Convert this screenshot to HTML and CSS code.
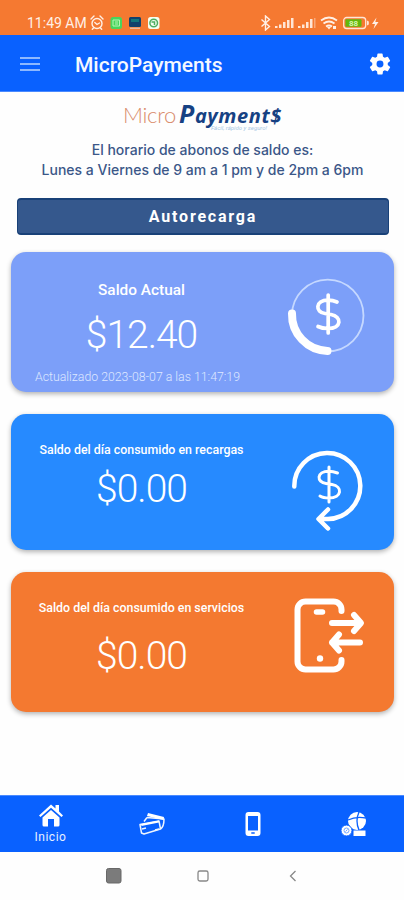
FILE: index.html
```
<!DOCTYPE html>
<html lang="es">
<head>
  <meta charset="UTF-8">
  <meta name="viewport" content="width=device-width, initial-scale=1.0">
  <title>MicroPayments</title>
  <link rel="stylesheet" href="styles.css">
</head>
<body>
  <div class="status">
    <div class="status-left">
      <span class="hora">11:49 AM</span>
      <svg width="70" height="16" viewBox="0 0 70 16">
        <g fill="none" stroke="#fff0e6" stroke-width="1.4" stroke-linecap="round">
          <circle cx="7" cy="8.500" r="5"/>
          <path d="M1 4l3-3M13 4l-3-3M4.800 7.500l2.200 2 2.500-1.500M3.500 13l-1.200 1.300M10.500 13l1.200 1.300"/>
        </g>
        <rect x="20.500" y="2" width="11.500" height="12" rx="2.500" fill="#48d45c"/>
        <path d="M23 5h6.500v6H23zM25 7h3M25 9h3" fill="none" stroke="#b6f5b5"/>
        <rect x="39" y="2" width="12" height="10" rx="1.500" fill="#12406b"/>
        <path d="M41 4h8v3h-8z" fill="#12757c"/>
        <path d="M40 13.300h10" stroke="#e8b9a0" stroke-width="1.500"/>
        <rect x="58" y="2" width="11.500" height="12" rx="2.500" fill="#f4fff2"/>
        <circle cx="63.700" cy="8" r="3.800" fill="none" stroke="#4cae62" stroke-width="1.500"/>
        <path d="M61.500 7h3v3" fill="none" stroke="#4cae62" stroke-width="1.500"/>
      </svg>
    </div>
    <svg width="120" height="16" viewBox="0 0 120 16">
      <path d="M1.500 4.500l8 7-4 3.500V1l4 3.500-8 7" fill="none" stroke="#fff0e6" stroke-width="1.400"/>
      <path d="M15 13h2.500v-2H15zm4 0h2.500V9.500H19zm4 0h2.500v-6H23zm4 0h2.500V5H27zm4 0h2.500V3H31z" fill="#ffe6d6"/>
      <path d="M38 13h2.500v-2H38zm4 0h2.500V9.500H42zm4 0h2.500v-6H46zm4 0h2.500V4H50z" fill="#ffe6d6"/>
      <path d="M54 13h1.500V3H54z" fill="#f9a878"/>
      <g fill="none" stroke="#fff0e6" stroke-width="1.800">
        <path d="M61 5.500q8-6 16 0M63.500 8.500q5.500-4 11 0M66 11.500q3-2 6 0"/>
      </g>
      <path d="M67 12h4l-2 2.500zM73 11h3v3h-3z" fill="#fff0e6"/>
      <rect x="83.700" y="2.500" width="22" height="11" rx="3" fill="none" stroke="#ffe6d6" stroke-width="1.300"/>
      <rect x="85.500" y="4.300" width="16" height="7.500" rx="1" fill="#63b80c"/>
      <path d="M107 5.500l1.800 1v3l-1.800 1z" fill="#ffe6d6"/>
      <text class="bateria" x="93.500" y="10.800" text-anchor="middle">88</text>
      <path d="M116.500 2.500L112 9h3l-1.500 5 5-7h-3.200z" fill="#fff0e6"/>
    </svg>
  </div>

  <header class="header">
    <svg width="20" height="14" viewBox="0 0 20 14">
      <path d="M0 1h20M0 7h20M0 13h20" stroke="#b9d5ff" stroke-width="1.600"/>
    </svg>
    <h1>MicroPayments</h1>
    <svg width="26" height="26" viewBox="0 0 24 24">
      <path fill="#fff" d="M19.140 12.940c.040-.300.060-.610.060-.940s-.020-.640-.070-.940l2.030-1.580a.490.490 0 0 0 .120-.610l-1.920-3.320a.490.490 0 0 0-.590-.220l-2.390.960a7 7 0 0 0-1.620-.940l-.360-2.540a.480.480 0 0 0-.480-.410h-3.840a.480.480 0 0 0-.470.410l-.360 2.540a7.300 7.300 0 0 0-1.620.940l-2.390-.960a.480.480 0 0 0-.590.220L2.740 8.870a.480.480 0 0 0 .120.610l2.030 1.580a6 6 0 0 0 0 1.880l-2.030 1.580a.490.490 0 0 0-.120.610l1.920 3.320c.120.220.370.290.590.220l2.390-.960c.500.380 1.030.700 1.620.940l.360 2.540c.050.240.240.410.480.410h3.840c.240 0 .440-.170.470-.410l.360-2.540a7 7 0 0 0 1.620-.940l2.390.960c.220.080.470 0 .590-.220l1.920-3.320a.480.480 0 0 0-.120-.610zM12 15.200a3.200 3.200 0 1 1 0-6.400 3.200 3.200 0 0 1 0 6.400z"/>
    </svg>
  </header>

  <main class="contenido">
    <div class="logo">
      <span class="logo-micro">Micro</span>
      <span class="logo-pay"><span class="logo-p">P</span>ayment$</span>
      <span class="lema">Fácil, rápido y seguro!</span>
    </div>
    <div class="horario">
      <p class="linea1">El horario de abonos de saldo es:</p>
      <p class="linea2">Lunes a Viernes de 9 am a 1 pm y de 2pm a 6pm</p>
    </div>
    <button class="autorecarga">Autorecarga</button>

    <section class="card card-actual">
      <div class="datos">
        <h2>Saldo Actual</h2>
        <p class="monto">$12.40</p>
        <p class="fecha">Actualizado 2023-08-07 a las 11:47:19</p>
      </div>
      <svg class="icono" width="90" height="90" viewBox="0 0 90 90" fill="none" stroke="#fff" stroke-linecap="round">
        <circle cx="44.700" cy="45.500" r="35.800" stroke="#c5d8ff" stroke-width="1.800"/>
        <path d="M9 43.500A36.500 36.500 0 0 0 44.500 81" stroke-width="8"/>
        <path d="M45.200 25v38M54 32Q50 30.200 45 30.200C32 30.200 32 42.500 42 43.500L48 44.500C59 46.500 59 58.500 45 58.500Q39 58.500 35 56.500" stroke-width="3.700"/>
      </svg>
    </section>

    <section class="card card-recargas">
      <div class="datos">
        <h2>Saldo del día consumido en recargas</h2>
        <p class="monto">$0.00</p>
      </div>
      <svg class="icono" width="90" height="92" viewBox="0 0 90 92" fill="none" stroke="#fff" stroke-linecap="round" stroke-linejoin="round">
        <path d="M11.300 46.500A33 33 0 1 1 45 79H36.500M45 69.500L35.500 79l9.500 9.500" stroke-width="4.500"/>
        <path d="M46 27v35M54.500 33Q50 31.300 46 31.300C33 31.300 33.500 42.500 43 43.500L49 44.500C60 46.500 59 58 46 58Q40 58 37 56" stroke-width="3"/>
      </svg>
    </section>

    <section class="card card-servicios">
      <div class="datos">
        <h2>Saldo del día consumido en servicios</h2>
        <p class="monto">$0.00</p>
      </div>
      <svg class="icono" width="90" height="90" viewBox="0 0 90 90" fill="none" stroke="#fff" stroke-width="6" stroke-linecap="round" stroke-linejoin="round">
        <path d="M58.500 21v-1.500a8 8 0 0 0-8-8h-28a8 8 0 0 0-8 8v52a8 8 0 0 0 8 8h28a8 8 0 0 0 8-8V70"/>
        <path d="M33.500 22h6" stroke-width="5.500"/>
        <path d="M49 33h28M71 25l7 8-7 8M77 52.500H49M56 44.500l-7 8 7 8"/>
        <circle cx="37" cy="68.500" r="3.200" fill="#fff" stroke="none"/>
      </svg>
    </section>
  </main>

  <nav class="tabs">
    <a class="tab">
      <svg width="26" height="24" viewBox="0 0 26 24">
        <path d="M1 12.500L13 1.500l4.500 4V2H21v6.500l4 4-1.500 1.500L13 4.700 2.500 14z" fill="#fff"/>
        <path d="M13 7l8.500 7.500V22q0 1.500-1.500 1.500h-4V16h-6v7.500H6Q4.500 23.500 4.500 22v-7.500z" fill="#fff"/>
      </svg>
      <span>Inicio</span>
    </a>
    <a class="tab">
      <svg width="26" height="24" viewBox="0 0 26 24">
        <g fill="none" stroke="#eef5ff" stroke-width="1.500" stroke-linejoin="round">
          <path d="M1 12.500l19-3.500 1.500 8-16.500 5-2.500-1z"/>
          <path d="M8 5.500L25 7q0 8-3.500 10M8 5.500L5 9.500M3 17l4-1M16 18l4-1"/>
        </g>
        <path d="M9 1l16 4-.5 3L8 4z" fill="#fff"/>
        <path d="M2 12l18-3.500v2L2.500 14z" fill="#fff"/>
      </svg>
    </a>
    <a class="tab">
      <svg width="26" height="24" viewBox="0 0 26 24">
        <path fill="#fff" fill-rule="evenodd" d="M8.500 0h9a3 3 0 0 1 3 3v18a3 3 0 0 1-3 3h-9a3 3 0 0 1-3-3V3a3 3 0 0 1 3-3zM8 4v14.500h10V4zM11.300 20.200v1.600h3.400v-1.600z"/>
      </svg>
    </a>
    <a class="tab">
      <svg width="26" height="24" viewBox="0 0 26 24">
        <circle cx="16" cy="9" r="9" fill="#fff"/>
        <path d="M7 8q8-4 18-2M18 0q-4 9 0 18" fill="none" stroke="#0961ff" stroke-width="1.300"/>
        <path d="M12.500 18.500h12V24h-12z" fill="#fff"/>
        <circle cx="5.500" cy="18.500" r="5.500" fill="#fff" stroke="#0961ff"/>
        <circle cx="5.500" cy="18.500" r="2.500" fill="none" stroke="#78a8ff"/>
        <path d="M4.500 19.500l2-2" stroke="#78a8ff"/>
      </svg>
    </a>
  </nav>

  <footer class="sistema">
    <svg width="404" height="48" viewBox="0 0 404 48">
      <rect x="106.500" y="16.500" width="14.500" height="14.500" rx="2" fill="#7b7b7b" stroke="#686868"/>
      <rect x="198" y="19" width="10" height="10" rx="1.800" fill="none" stroke="#888" stroke-width="1.300"/>
      <path d="M295.500 19l-5 5 5 5" fill="none" stroke="#888" stroke-width="1.300"/>
    </svg>
  </footer>
</body>
</html>
```
FILE: styles.css
```
* {
  box-sizing: border-box;
}
body {
  margin: 0;
  width: 404px;
  height: 900px;
  display: flex;
  flex-direction: column;
  background: #fefefe;
  font-family: Roboto, sans-serif;
  overflow: hidden;
}
h1, h2, p {
  margin: 0;
}
svg {
  display: block;
  flex-shrink: 0;
}
.status {
  height: 35px;
  padding: 11px 24px 0 27px;
  display: flex;
  justify-content: space-between;
  align-items: center;
  background: #f57931;
}
.status-left {
  display: flex;
  align-items: center;
  gap: 3px;
}
.hora {
  color: #fff0e6;
  font-size: 14px;
  line-height: 16px;
}
.bateria {
  font-size: 8px;
  font-weight: bold;
  fill: #d8f5b0;
}
.header {
  height: 57px;
  padding: 1px 11px 0 20px;
  display: flex;
  align-items: center;
  background: #0961ff;
  border-bottom: 1px solid #4a8aff;
}
.header h1 {
  flex: 1;
  margin: 2px 0 0 35px;
  color: #f4f8ff;
  font-size: 21px;
  font-weight: 500;
}
.contenido {
  flex: 1;
  padding: 6px 10px 0 11px;
}
.logo {
  position: relative;
  width: 160px;
  height: 38px;
  margin: 0 auto 0 112px;
  display: flex;
  align-items: baseline;
  gap: 3px;
  line-height: 30px;
  white-space: nowrap;
}
.logo-micro {
  color: #d98b6b;
  font-family: Lato, sans-serif;
  font-size: 22px;
  font-weight: 300;
  letter-spacing: -0.3px;
}
.logo-pay {
  color: #164183;
  font-family: "Open Sans", sans-serif;
  font-size: 20px;
  font-weight: 700;
  font-style: italic;
  letter-spacing: 0.6px;
}
.logo-p {
  font-size: 25px;
}
.lema {
  position: absolute;
  left: 88px;
  top: 26px;
  color: #a9c8e4;
  font-size: 6px;
  line-height: 8px;
  font-style: italic;
}
.horario {
  height: 62px;
  padding-top: 4px;
  color: #3b5788;
  font-family: Inter, sans-serif;
  font-size: 14px;
  font-weight: 500;
  line-height: 20px;
  text-align: center;
  white-space: nowrap;
}
.autorecarga {
  display: block;
  width: 372px;
  height: 37px;
  margin: 0 0 17px 6px;
  border: 1px solid #194178;
  border-width: 2px 1px;
  border-radius: 4px;
  background: #35588d;
  color: #fff;
  font-family: Roboto, sans-serif;
  font-size: 16px;
  font-weight: 700;
  letter-spacing: 1.8px;
}
.card {
  display: flex;
  border-radius: 15px;
  color: #fff;
  box-shadow: 0 2px 5px rgba(0,0,0,0.3);
}
.datos {
  width: 261px;
  text-align: center;
  white-space: nowrap;
}
.icono {
  margin-left: 11px;
}
.card h2 {
  font-size: 12.4px;
  line-height: 16px;
  font-weight: 500;
}
.monto {
  font-size: 39px;
  line-height: 44px;
  font-weight: 300;
  letter-spacing: -1px;
}
.card-actual {
  height: 140px;
  margin-bottom: 22px;
  padding-top: 18px;
  background: #7c9ff9;
}
.card-actual h2 {
  margin: 12px 0 15px;
  font-size: 15.400px;
}
.fecha {
  margin: 12px 0 0 -8px;
  color: #dfe8ff;
  font-size: 12.300px;
  line-height: 16px;
  font-weight: 300;
}
.card-recargas {
  height: 136px;
  margin-bottom: 22px;
  padding-top: 26px;
  background: #268aff;
}
.card-recargas h2 {
  margin: 2px 0 9px;
}
.card-servicios {
  height: 140px;
  padding-top: 18px;
  background: #f47930;
}
.card-servicios h2 {
  margin: 10px 0 18px;
}
.tabs {
  height: 57px;
  padding-bottom: 1px;
  display: grid;
  grid-template-columns: repeat(4, 1fr);
  background: #0961ff;
  border-top: 1px solid #4a8aff;
}
.tab {
  display: flex;
  flex-direction: column;
  align-items: center;
  justify-content: center;
  gap: 2px;
  color: #e7f0ff;
  font-size: 12px;
  line-height: 16px;
  letter-spacing: 0.5px;
}
.sistema {
  height: 48px;
}
```
